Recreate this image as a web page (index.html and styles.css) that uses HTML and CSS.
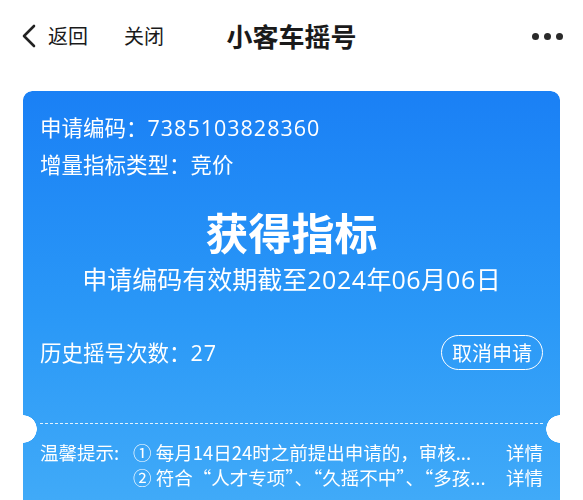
FILE: index.html
```html
<!DOCTYPE html>
<html lang="zh-CN">
<head>
<meta charset="utf-8">
<title>小客车摇号</title>
<link rel="stylesheet" href="styles.css">
</head>
<body>
<header class="nav">
  <div class="nav-left">
    <span class="back">
      <svg width="16" height="24" viewBox="0 0 16 24"><path d="M13 2 L3 12 L13 22" fill="none" stroke="#222" stroke-width="2.6" stroke-linecap="round" stroke-linejoin="round"/></svg>
      <span class="nav-text">返回</span>
    </span>
    <span class="nav-text close">关闭</span>
  </div>
  <h1 class="nav-title">小客车摇号</h1>
  <div class="nav-right">
    <span class="dot"></span><span class="dot"></span><span class="dot"></span>
  </div>
</header>

<main class="card">
  <div class="card-top">
    <p class="info">申请编码：<span class="num">7385103828360</span></p>
    <p class="info">增量指标类型：竞价</p>
    <h2 class="result">获得指标</h2>
    <p class="expire">申请编码有效期截至<span class="num">2024</span>年<span class="num">06</span>月<span class="num">06</span>日</p>
    <div class="row">
      <p class="info">历史摇号次数：<span class="num">27</span></p>
      <button class="cancel">取消申请</button>
    </div>
  </div>
  <div class="divider"></div>
  <div class="tips">
    <span class="tips-label">温馨提示:</span>
    <div class="tips-list">
      <div class="tip"><span class="tip-text">① 每月14日24时之前提出申请的，审核...</span><span class="tip-more">详情</span></div>
      <div class="tip"><span class="tip-text">② 符合“人才专项”、“久摇不中”、“多孩...</span><span class="tip-more">详情</span></div>
    </div>
  </div>
</main>
</body>
</html>
```

FILE: styles.css
```css
* { box-sizing: border-box; }
html, body { margin: 0; padding: 0; background: #fff; }
body {
  font-family: "Noto Sans CJK SC", "Noto Sans", sans-serif;
  color: #1a1a1a;
  width: 583px;
  height: 500px;
  overflow: hidden;
}
.nav {
  height: 72px;
  display: flex;
  align-items: center;
  justify-content: space-between;
  padding: 0 20px 0 21px;
  position: relative;
}
.nav-left { display: flex; align-items: center; }
.back { display: flex; align-items: center; gap: 11px; }
.back svg { display: block; }
.nav-text { font-size: 20px; color: #1a1a1a; line-height: 28px; }
.close { margin-left: 36px; }
.nav-title {
  position: absolute;
  left: 0; right: 0;
  text-align: center;
  margin: 0;
  font-size: 26px;
  font-weight: 700;
  pointer-events: none;
  line-height: 72px;
}
.nav-right { display: flex; gap: 5px; }
.dot { width: 7px; height: 7px; border-radius: 50%; background: #2a2a2a; }

.card {
  margin: 19px 23px 0 23px;
  height: 409px;
  border-radius: 9px 9px 0 0;
  background: linear-gradient(180deg, #1a80f5 0%, #2a98f7 55%, #40aaf8 100%);
  color: #fff;
  -webkit-mask: radial-gradient(circle 14px at 0 338px, transparent 13.5px, #000 14px),
                radial-gradient(circle 14px at 100% 338px, transparent 13.5px, #000 14px);
  -webkit-mask-composite: source-in;
  mask-composite: intersect;
}
.card-top { padding: 18px 17px 0 17px; }
.info { margin: 0; font-size: 21.5px; line-height: 36px; }
.num { font-family: "Open Sans", sans-serif; letter-spacing: 1px; }
.result {
  margin: 23px 0 0;
  text-align: center;
  font-size: 43px;
  font-weight: 700;
  line-height: 52px;
}
.expire {
  margin: 4px 0 0;
  text-align: center;
  font-size: 25px;
  line-height: 34px;
}
.expire .num { letter-spacing: 0.5px; }
.row {
  margin-top: 38px;
  display: flex;
  align-items: center;
  justify-content: space-between;
}
.cancel {
  font-family: inherit;
  font-size: 20px;
  color: #fff;
  background: transparent;
  border: 1.5px solid #fff;
  border-radius: 18px;
  height: 35px;
  width: 102px;
  padding: 0;
  line-height: 32px;
}
.divider {
  margin: 52px 17px 0 17px;
  border-top: 1.5px dashed rgba(255,255,255,0.85);
}
.tips {
  display: flex;
  padding: 16px 17px 0 17px;
  font-size: 18.5px;
  line-height: 25px;
}
.tips-label { width: 93px; flex: none; }
.tips-list { flex: 1; display: flex; flex-direction: column; min-width: 0; }
.tip { display: flex; justify-content: space-between; white-space: nowrap; }
.tip-text { overflow: hidden; }
.tip-more { flex: none; }
```
